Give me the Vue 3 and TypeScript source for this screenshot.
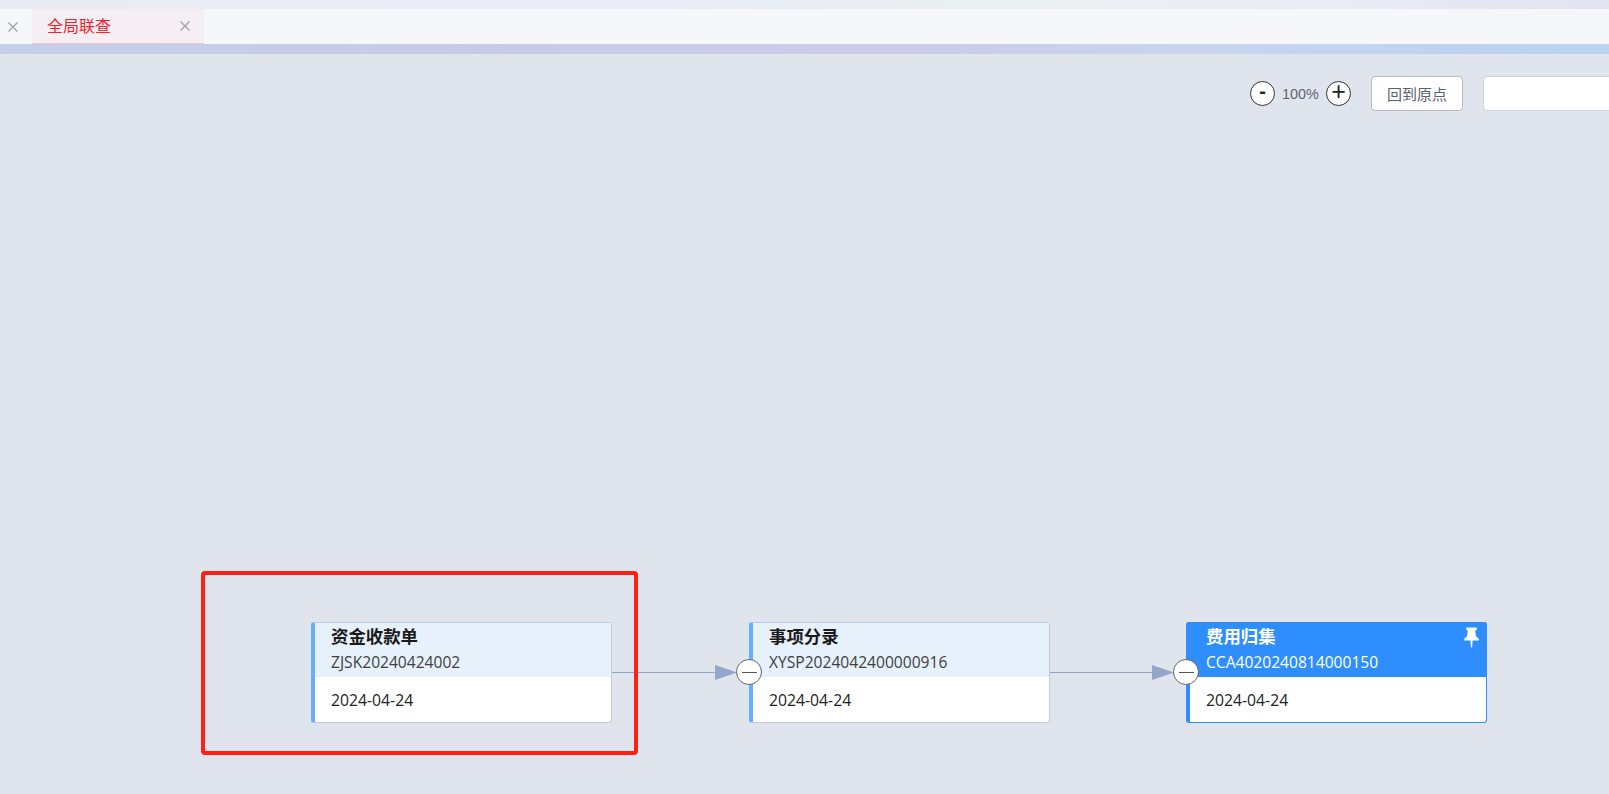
<script setup lang="ts">
interface FlowNode {
  title: string
  code: string
  date: string
  left: number
  active?: boolean
  collapsible?: boolean
}

const nodes: FlowNode[] = [
  { title: '资金收款单', code: 'ZJSK20240424002', date: '2024-04-24', left: 311 },
  { title: '事项分录', code: 'XYSP2024042400000916', date: '2024-04-24', left: 749, collapsible: true },
  { title: '费用归集', code: 'CCA4020240814000150', date: '2024-04-24', left: 1186, active: true, collapsible: true },
]

const edges = [
  { x1: 612, x2: 716, tip: 737 },
  { x1: 1049, x2: 1153, tip: 1174 },
]
</script>

<template>
  <div class="page">
    <div class="top-strip"></div>
    <div class="tabbar">
      <div class="home-tab">
        <svg class="close" viewBox="0 0 12 12"><path d="M1.5 1.5l9 9M10.5 1.5l-9 9" /></svg>
      </div>
      <div class="tab">
        <span class="tab-label">全局联查</span>
        <svg class="close" viewBox="0 0 12 12"><path d="M1.5 1.5l9 9M10.5 1.5l-9 9" /></svg>
      </div>
    </div>
    <div class="bottom-strip"></div>

    <main class="canvas">
      <div class="toolbar">
        <div class="zoom">
          <button class="round minus">-</button>
          <span class="percent">100%</span>
          <button class="round plus">+</button>
        </div>
        <button class="reset">回到原点</button>
        <input class="search" type="text" />
      </div>

      <svg class="edges" width="1609" height="740" viewBox="0 54 1609 740">
        <g v-for="e in edges" :key="e.x1">
          <line :x1="e.x1" y1="672.5" :x2="e.x2" y2="672.5" stroke="#8fa6cc" stroke-width="1" />
          <polygon :points="`${e.x2 - 1},665 ${e.tip},672.5 ${e.x2 - 1},680`" fill="#92a7cb" />
        </g>
      </svg>

      <article
        v-for="n in nodes"
        :key="n.code"
        class="node"
        :class="{ active: n.active }"
        :style="{ left: n.left + 'px' }"
      >
        <header class="node-head">
          <div class="node-title">{{ n.title }}</div>
          <div class="node-code">{{ n.code }}</div>
          <svg v-if="n.active" class="pin" viewBox="0 0 16 20">
            <path d="M3 0.5h10v2l-1.6 1.2 1 5.3 2.6 2.2v1.6H9l-.4 6.7h-1.2L7 12.8H1V11.2l2.6-2.2 1-5.3L3 2.5z" />
          </svg>
        </header>
        <div class="node-body">{{ n.date }}</div>
        <span v-if="n.collapsible" class="toggle"><i></i></span>
      </article>

      <div class="highlight"></div>
    </main>
  </div>
</template>

<style>
html, body { margin: 0; height: 100%; overflow: hidden; }
</style>

<style scoped>
.page {
  width: 1609px;
  height: 794px;
  display: flex;
  flex-direction: column;
  overflow: hidden;
  background: #e0e4ed;
  font-family: "Open Sans", "Noto Sans CJK SC", sans-serif;
}
.top-strip {
  height: 9px;
  background: linear-gradient(90deg, #e6ebf4 0%, #e7ecf6 40%, #e9f0f2 62%, #e9eef5 78%, #e3e4f3 100%);
}
.tabbar {
  height: 35px;
  display: flex;
  background: #f6f7fb;
}
.home-tab {
  width: 32px;
  display: flex;
  align-items: center;
  justify-content: center;
  padding-right: 6px;
  box-sizing: border-box;
}
.tab {
  width: 172px;
  display: flex;
  align-items: center;
  justify-content: space-between;
  box-sizing: border-box;
  padding: 0 13px 0 15px;
  background: #f5eef2;
  border-bottom: 1px solid #f4c5cd;
}
.tab-label {
  color: #f5222d;
  font-size: 16px;
  line-height: 22px;
}
.close {
  width: 12px;
  height: 12px;
  fill: none;
  stroke: #a3a5aa;
  stroke-width: 1.4;
}
.bottom-strip {
  height: 10px;
  background: linear-gradient(90deg, #c4cfe9 0%, #c8cbe8 30%, #cdcbe9 55%, #c7d5f0 75%, #b9d2f2 100%);
}
.canvas {
  position: relative;
  flex: 1;
}
.toolbar {
  display: flex;
  align-items: center;
  height: 35px;
  margin-top: 22px;
  padding-left: 1250px;
  white-space: nowrap;
}
.zoom {
  flex: none;
  display: flex;
  align-items: center;
  width: 121px;
}
.round {
  flex: none;
  width: 25px;
  height: 25px;
  padding: 0;
  border: 1px solid #333;
  border-radius: 50%;
  background: #fff;
  color: #222;
  font-family: "Liberation Sans", sans-serif;
  font-size: 20px;
  font-weight: 700;
  line-height: 19px;
  display: flex;
  justify-content: center;
}
.plus { font-weight: 400; font-size: 25px; line-height: 18px; }
.percent {
  flex: none;
  width: 44px;
  margin: 0 0 0 7px;
  color: #5f6570;
  font-family: "Liberation Sans", sans-serif;
  font-size: 14.4px;
}
.reset {
  flex: none;
  width: 92px;
  height: 35px;
  border: 1px solid #b9bcc3;
  border-radius: 4px;
  background: #fff;
  color: #5a6270;
  font-family: inherit;
  font-size: 15px;
  padding: 0;
}
.search {
  flex: none;
  width: 180px;
  height: 35px;
  margin-left: 20px;
  box-sizing: border-box;
  border: 1px solid #ced2db;
  border-radius: 4px;
  background: #fff;
}
.edges {
  position: absolute;
  left: 0;
  top: 0;
}
.node {
  position: absolute;
  top: 568px;
  width: 301px;
  height: 101px;
  box-sizing: border-box;
  border: 1px solid #bfcbe0;
  border-left: 4px solid #68aefc;
  border-radius: 3px;
  background: #fff;
  display: flex;
  flex-direction: column;
}
.node-head {
  position: relative;
  height: 54px;
  box-sizing: border-box;
  flex: none;
  padding-left: 16px;
  background: #e6f1fc;
  color: #3f3f3f;
}
.node-title {
  font-size: 17.4px;
  font-weight: 700;
  line-height: 26px;
  color: #1a1a1a;
}
.node-code {
  font-size: 15.6px;
  line-height: 26px;
}
.node-body {
  padding: 11px 0 0 16px;
  font-size: 15.75px;
  line-height: 24px;
  color: #222;
}
.node.active {
  border-color: #2e8efd;
}
.node.active .node-head {
  margin: -1px -1px 0 -4px;
  height: 55px;
  padding: 1px 0 0 20px;
  background: #2e8efd;
  border-radius: 3px 3px 0 0;
  color: #fff;
}
.node.active .node-title { color: #fff; }
.pin {
  position: absolute;
  right: 7px;
  top: 5px;
  width: 17px;
  height: 21px;
  fill: #fff;
}
.toggle {
  position: absolute;
  left: -17px;
  top: 36px;
  width: 26px;
  height: 26px;
  box-sizing: border-box;
  border: 1px solid #666;
  border-radius: 50%;
  background: #fff;
  display: flex;
  align-items: center;
  justify-content: center;
}
.toggle i {
  display: block;
  width: 15px;
  height: 1px;
  background: #555;
}
.highlight {
  position: absolute;
  left: 201px;
  top: 517px;
  width: 437px;
  height: 184px;
  box-sizing: border-box;
  border: 4px solid #fe2015;
  border-radius: 4px;
}
</style>
